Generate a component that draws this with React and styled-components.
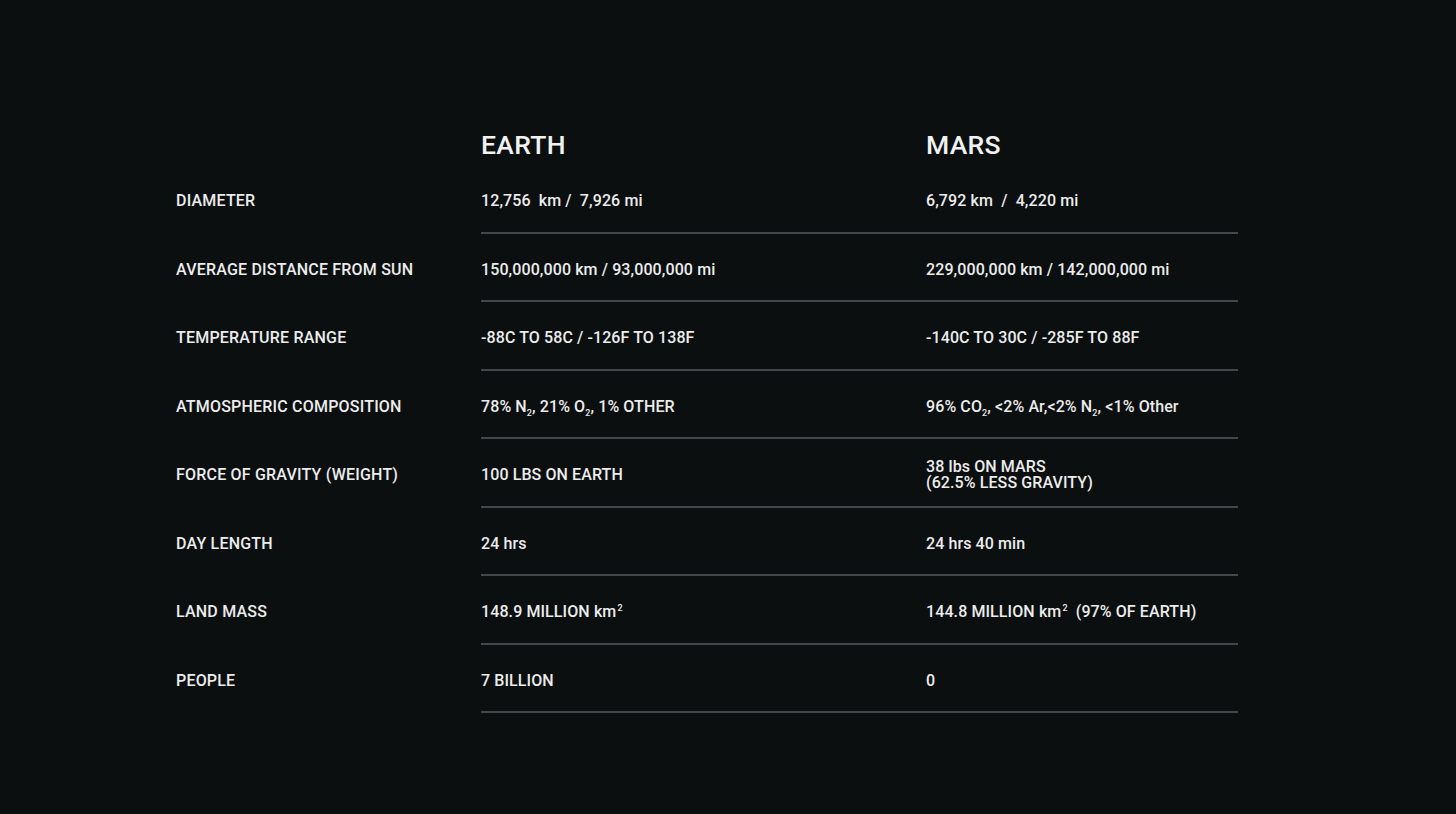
import React from "react"
import styled, { createGlobalStyle } from "styled-components"

const GlobalStyle = createGlobalStyle`
  html, body {
    margin: 0;
    padding: 0;
    background: #0b0f10;
  }
  body {
    font-family: Roboto, "Liberation Sans", sans-serif;
    color: #ececec;
  }
`

const Page = styled.div`
  min-height: 814px;
  box-sizing: border-box;
  padding: 120px 0 0 176px;
  background: #0b0f10;
`

const Table = styled.div`
  display: flex;
  flex-direction: column;
  width: 1062px;
`

const Row = styled.div`
  display: grid;
  grid-template-columns: 305px 757px;
  height: ${({ head }) => (head ? "45px" : "68.5px")};
`

const Label = styled.div`
  display: flex;
  align-items: center;
  box-sizing: border-box;
  padding-top: 4px;
  font-size: 16px;
  font-weight: 500;
  line-height: 16px;
  letter-spacing: 0.2px;
`

const Values = styled.div`
  display: grid;
  grid-template-columns: 445px 312px;
  box-sizing: border-box;
  border-bottom: ${({ head }) => (head ? "none" : "2px solid #444749")};
`

const Cell = styled.div`
  display: flex;
  align-items: center;
  box-sizing: border-box;
  padding-top: ${({ head }) => (head ? "4px" : "6px")};
  font-size: 16px;
  font-weight: 500;
  line-height: 16px;
  letter-spacing: 0.1px;
`

const Text = styled.span`
  white-space: pre-wrap;
`

const Planet = styled.h2`
  margin: 0;
  font-size: 26.5px;
  font-weight: 500;
  letter-spacing: 0.3px;
  color: #f2f2f2;
`

const Sub = styled.sub`
  font-size: 9px;
  vertical-align: -4px;
  line-height: 0;
`

const Sup = styled.sup`
  font-size: 9px;
  vertical-align: 6px;
  line-height: 0;
  margin-left: 1px;
`

const rows = [
  ["DIAMETER", "12,756  km /  7,926 mi", "6,792 km  /  4,220 mi"],
  ["AVERAGE DISTANCE FROM SUN", "150,000,000 km / 93,000,000 mi", "229,000,000 km / 142,000,000 mi"],
  ["TEMPERATURE RANGE", "-88C TO 58C / -126F TO 138F", "-140C TO 30C / -285F TO 88F"],
  [
    "ATMOSPHERIC COMPOSITION",
    <>78% N<Sub>2</Sub>, 21% O<Sub>2</Sub>, 1% OTHER</>,
    <>96% CO<Sub>2</Sub>, &lt;2% Ar,&lt;2% N<Sub>2</Sub>, &lt;1% Other</>,
  ],
  ["FORCE OF GRAVITY (WEIGHT)", "100 LBS ON EARTH", <>38 lbs ON MARS<br />(62.5% LESS GRAVITY)</>],
  ["DAY LENGTH", "24 hrs", "24 hrs 40 min"],
  [
    "LAND MASS",
    <>148.9 MILLION km<Sup>2</Sup></>,
    <>144.8 MILLION km<Sup>2</Sup>  (97% OF EARTH)</>,
  ],
  ["PEOPLE", "7 BILLION", "0"],
]

const App = () => {
  return (
    <Page>
      <GlobalStyle />
      <Table>
        <Row head>
          <Label />
          <Values head>
            <Cell head><Planet>EARTH</Planet></Cell>
            <Cell head><Planet>MARS</Planet></Cell>
          </Values>
        </Row>
        {rows.map(([label, earth, mars]) => (
          <Row key={label}>
            <Label>{label}</Label>
            <Values>
              <Cell><Text>{earth}</Text></Cell>
              <Cell><Text>{mars}</Text></Cell>
            </Values>
          </Row>
        ))}
      </Table>
    </Page>
  )
}

export default App
